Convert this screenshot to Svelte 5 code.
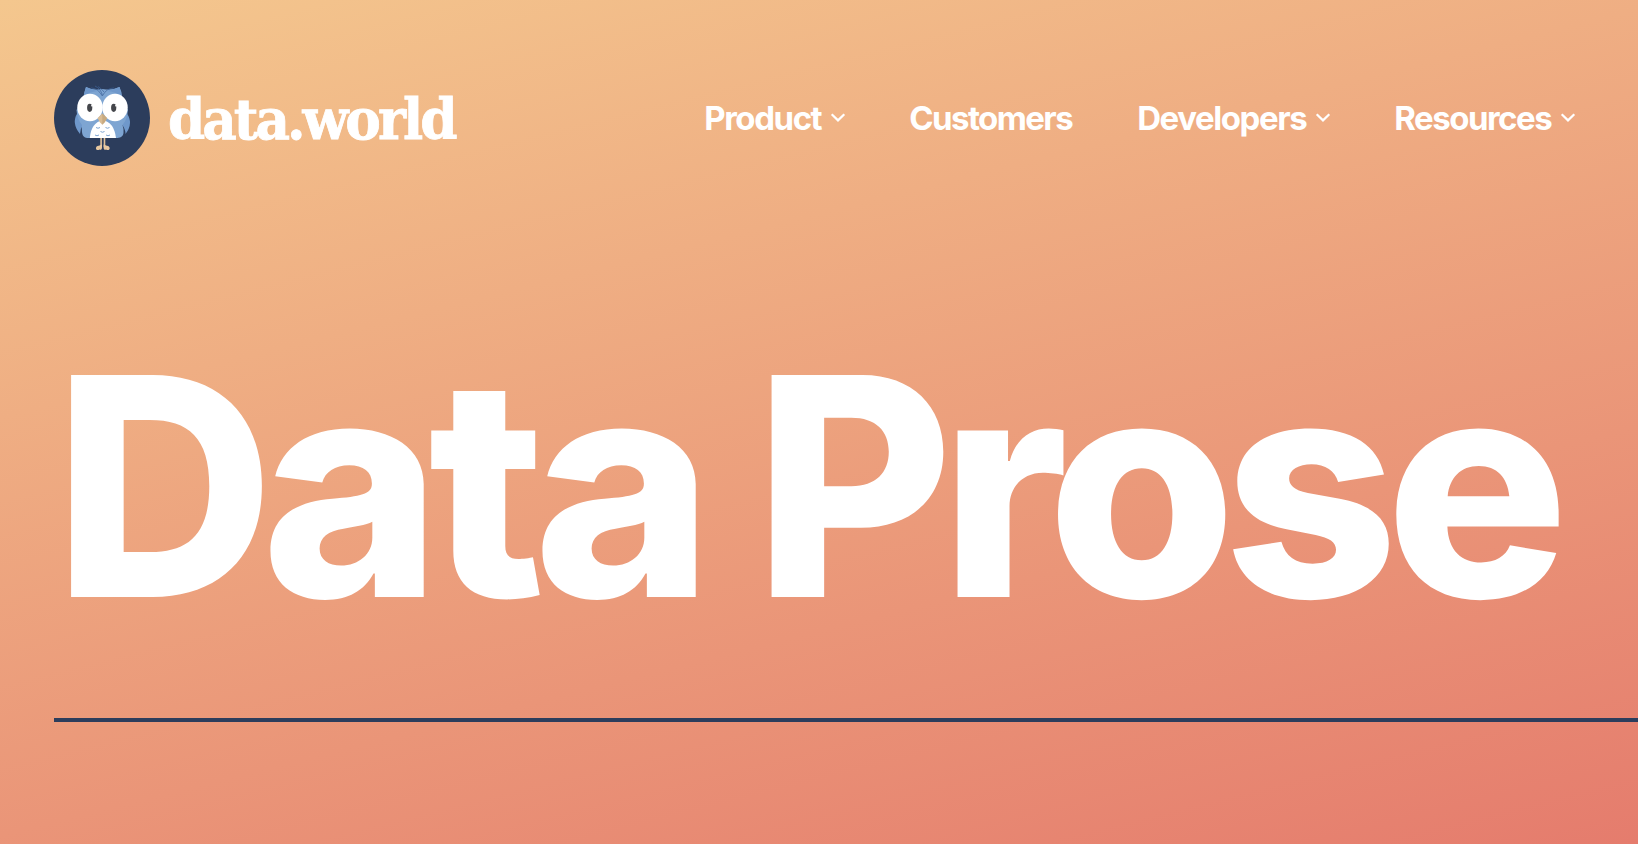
<script>
  const links = [
    { label: 'Product', menu: true, width: 117 },
    { label: 'Customers', menu: false, width: 163 },
    { label: 'Developers', menu: true, width: 169 },
    { label: 'Resources', menu: true, width: 157 },
  ];
</script>

<div class="page">
  <header>
    <a class="brand" href="#home" aria-label="data.world">
      <svg class="owl" viewBox="0 0 96 96" aria-hidden="true">
        <circle cx="48" cy="48" r="48" fill="#2c3d5c" />
        <path d="M46.300 67h1.600v10h-1.600zM49.700 67h1.600v10h-1.600z" fill="#e0c39c" />
        <path d="M48 74.500v3c0 2.300-1.500 2.800-2.500 2c-1.500 1.200-4 .5-3.500-1.700c.5-2.200 2.500-1.900 3.500-2.300zM49.600 74.500v3c0 2.300 1.500 2.800 2.500 2c1.500 1.200 4 .5 3.500-1.700c-.5-2.200-2.500-1.900-3.500-2.300z" fill="#e8c8a0" />
        <path d="M23.500 43Q17 53 26 64Q26 59 29.500 54ZM72.500 43Q80 53 71.500 64Q71.500 59 67.500 54Z" fill="#6f98cb" />
        <path d="M32 17Q38 20 44 19.500Q48 18.500 52 19.500Q59 20 65.500 17Q68 22 68 27L74 40Q73 50 68.500 55Q70 59 69.500 63C69 67 66 68 62 68H35C30 68 28.500 66 28 62Q27.500 58 28 55Q23 49 22.500 40L29.500 27Q30 22 32 17Z" fill="#7ea5d2" />
        <path d="M32 17Q39 20 44 21Q34 22 29.500 27ZM65.500 17Q58 20 53 21Q63 22 68 27Z" fill="#6f98cb" />
        <path d="M37 18Q44 18 48.300 26Q52.500 18 60 18M41 16Q47 19 48.300 25M44 16.500Q48 19 50 22" fill="none" stroke="#3d639a" stroke-width=".7" />
        <path d="M48.500 50Q60 52 62 68H35.800Q37 53 48.500 50Z" fill="#fff" />
        <ellipse cx="36" cy="37.500" rx="12.700" ry="13.700" fill="#fff" />
        <ellipse cx="61" cy="37.500" rx="12.700" ry="13.700" fill="#fff" />
        <path d="M48.300 43.500L53 48Q51.500 52 48.300 54.800Q45 52 43.600 48Z" fill="#d9bc94" />
        <path d="M48.300 43.500L53 48Q51.500 52 48.300 54.800Z" fill="#c8aa80" />
        <ellipse cx="35.700" cy="37.800" rx="2.600" ry="4.100" fill="#44464b" />
        <ellipse cx="59.700" cy="37.800" rx="2.600" ry="4.100" fill="#44464b" />
        <circle cx="37.800" cy="35.800" r=".8" fill="#fff" />
        <circle cx="61.800" cy="35.800" r=".8" fill="#fff" />
        <path d="M42 57.500q2 1.500 4 0M51.500 57.500q2 1.500 4 0M46.500 61.500q2 1.500 4 0M41 65q2 1.500 4 0M52 65q2 1.500 4 0" fill="none" stroke="#7ea5d2" stroke-width="1" />
      </svg>
      <svg class="wordmark" viewBox="0 0 292 60" aria-hidden="true">
        <text x="3" y="49.500" textLength="286.500" lengthAdjust="spacingAndGlyphs">data.world</text>
      </svg>
    </a>
    <nav>
      {#each links as link}
        <a href="#menu">
          <svg class="label" width={link.width} height="44" viewBox="0 0 {link.width} 44">
            <text x="-.8" y="34" textLength={link.width + 1.5} lengthAdjust="spacing">{link.label}</text>
          </svg>
          {#if link.menu}
            <svg class="chevron" viewBox="0 0 14 9" aria-hidden="true"><path d="M.7 1.200L7 7.400L13.300 1.200" /></svg>
          {/if}
        </a>
      {/each}
    </nav>
  </header>
  <h1>Data Prose</h1>
  <hr />
</div>

<style>
  :global(body) { margin: 0; }
  .page {
    box-sizing: border-box;
    height: 844px;
    padding: 70px 0 0 54px;
    overflow: hidden;
    color: #fff;
    font-family: Inter, sans-serif;
    background: linear-gradient(166deg, #f4c78e, #e57c6d);
  }
  header {
    display: flex;
    align-items: center;
    justify-content: space-between;
    height: 96px;
    padding-right: 63px;
  }
  a { color: inherit; text-decoration: none; }
  .brand { display: flex; align-items: center; gap: 15px; }
  .owl { width: 96px; height: 96px; }
  .wordmark { width: 292px; height: 60px; margin-top: 2px; overflow: visible; }
  .wordmark text {
    fill: #fff;
    stroke: #fff;
    stroke-width: .8px;
    font: 700 56px 'DejaVu Serif', serif;
    letter-spacing: -3.2px;
  }
  nav { display: flex; gap: 65px; }
  nav a { display: flex; align-items: center; }
  .label { overflow: visible; }
  .label text { fill: #fff; font: 700 33px Inter, sans-serif; }
  .chevron {
    width: 14px;
    height: 9px;
    margin: 0 0 2px 9px;
    overflow: visible;
    fill: none;
    stroke: #fff;
    stroke-width: 2.2;
  }
  h1 {
    margin: 136px 0 0 -.2px;
    font-size: 305px;
    line-height: 370px;
    font-weight: 800;
    letter-spacing: -12.7px;
    white-space: nowrap;
  }
  hr { height: 4px; margin: 46px 0 0; border: 0; background: #2c3d5c; }
</style>
